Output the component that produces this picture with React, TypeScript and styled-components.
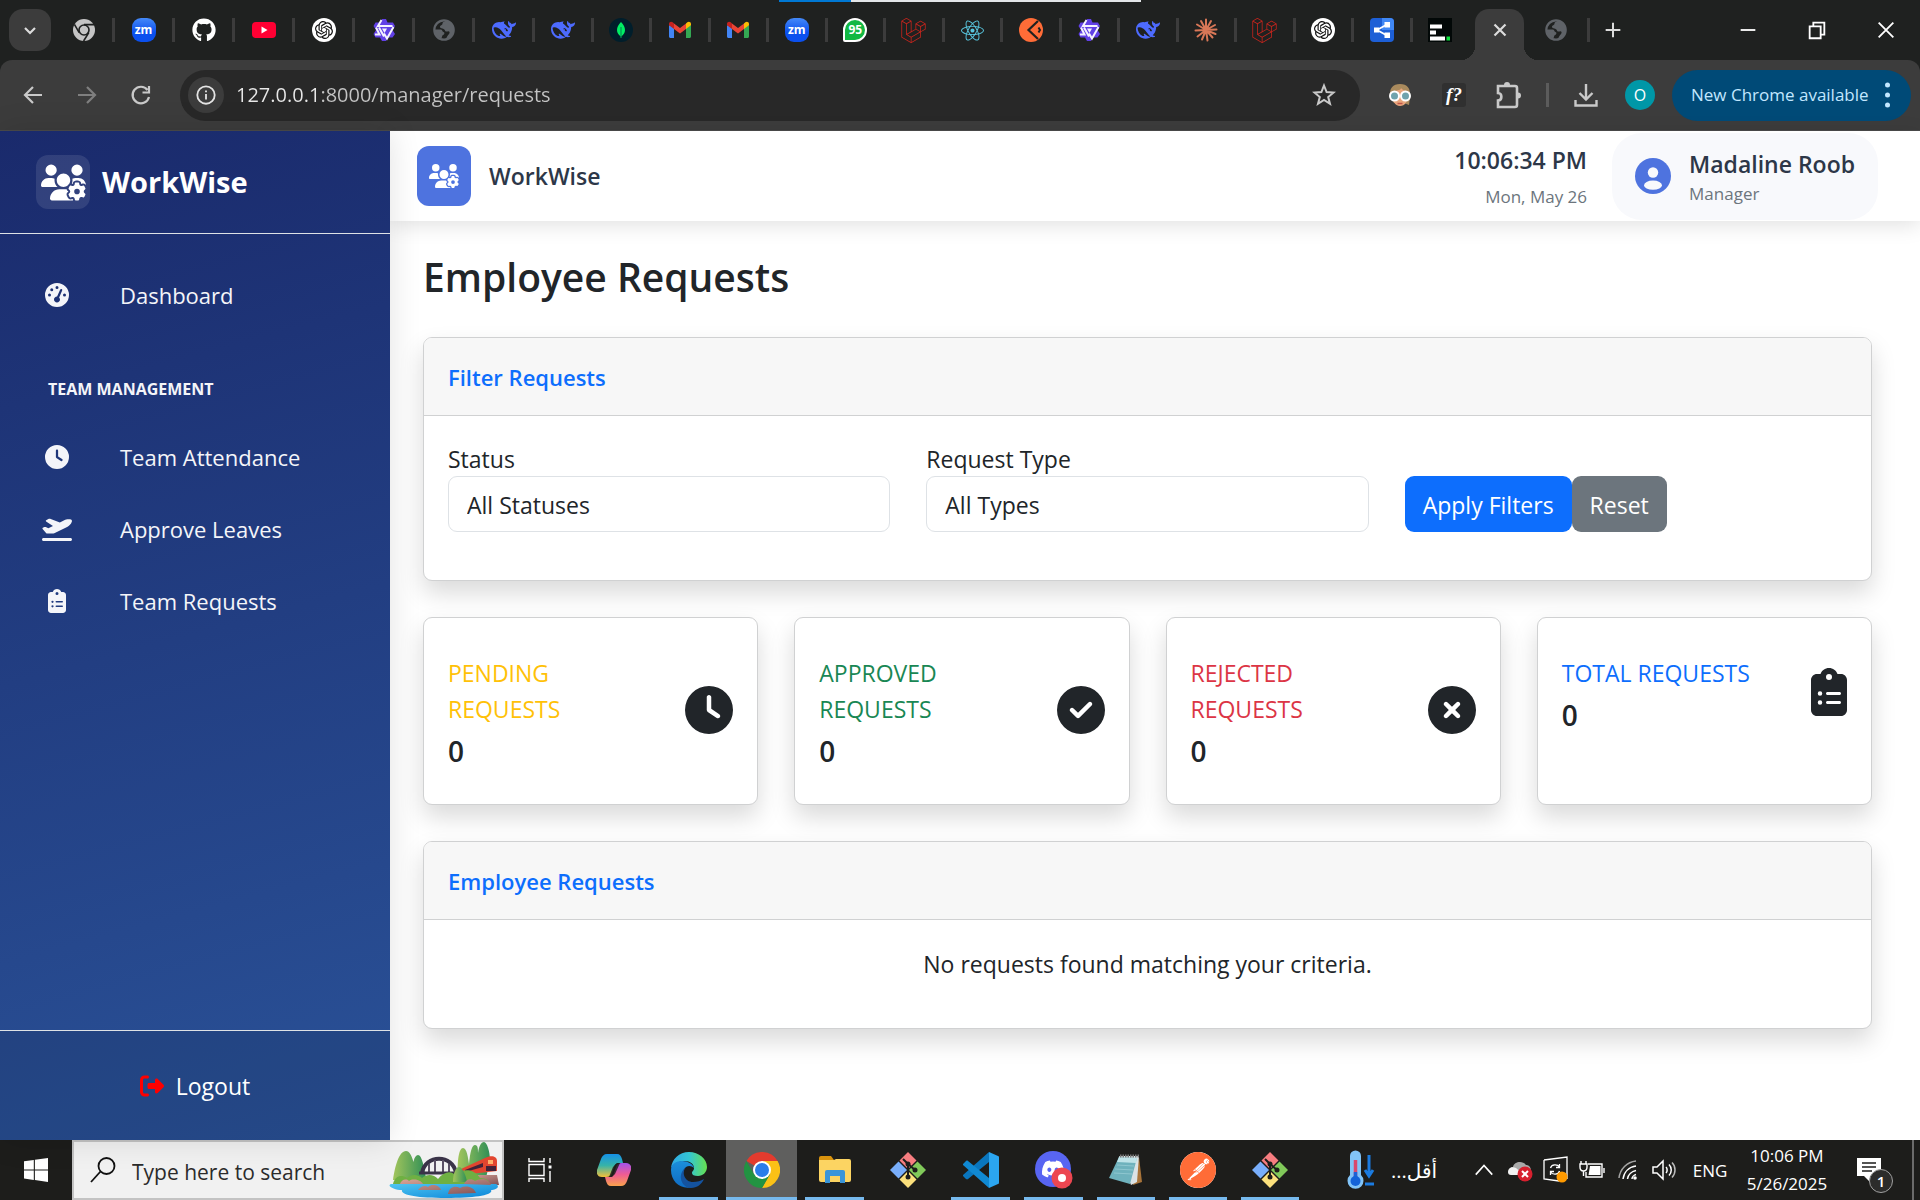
import React from "react";
import styled, { createGlobalStyle } from "styled-components";
import {
  FaUsersGear, FaGaugeHigh, FaClock, FaPlaneDeparture, FaClipboardList,
  FaRightFromBracket, FaCircleCheck, FaCircleXmark, FaGithub, FaLaravel, FaReact, FaDiscord,
} from "react-icons/fa6";
import { SiOpenai, SiPostman } from "react-icons/si";

const GlobalStyle = createGlobalStyle`
  *, *::before, *::after { box-sizing: border-box; }
  body { margin: 0; }
  body, button, input, select { font-family: "Open Sans", "Noto Sans", sans-serif; }
  h1, h2, p, ul { margin: 0; padding: 0; }
  button { border: 0; padding: 0; background: none; color: inherit; font: inherit; cursor: pointer; }
  a { color: inherit; text-decoration: none; }
  svg { display: block; flex: none; }
`;

const Screen = styled.div`
  display: flex;
  flex-direction: column;
  height: 100vh;
  overflow: hidden;
  position: relative;
`;

/* ---------- browser: tab strip ---------- */

const LoadBar = styled.div`
  position: absolute;
  top: 0;
  left: 779px;
  width: 362px;
  height: 2px;
  background: linear-gradient(90deg, #0078d4 72px, #e3e6e8 72px);
`;

const TabStrip = styled.div`
  display: flex;
  align-items: center;
  flex: none;
  height: 60px;
  padding-left: 9px;
  background: #1f2120;
  color: #dcdcdc;
`;

const TabSearch = styled.button`
  display: grid;
  place-items: center;
  width: 42px;
  height: 42px;
  margin-right: 4px;
  border-radius: 14px;
  background: #3c3c3c;
`;

const TabGroup = styled.div<{ $width: number }>`
  display: flex;
  flex: 0 0 ${(p) => p.$width}px;
`;

const Tab = styled.button<{ $last?: boolean }>`
  display: grid;
  place-items: center;
  flex: 1;
  height: 24px;
  border-right: 3px solid ${(p) => (p.$last ? "transparent" : "#3c3c3c")};
`;

const ActiveTab = styled.div`
  position: relative;
  display: grid;
  place-items: center;
  align-self: flex-end;
  width: 49px;
  height: 51px;
  margin-left: 4px;
  padding-bottom: 9px;
  border-radius: 14px 14px 0 0;
  background: #3c3c3c;
  &::before, &::after {
    content: "";
    position: absolute;
    bottom: 0;
    width: 14px;
    height: 14px;
  }
  &::before { right: 100%; background: radial-gradient(circle at 0 0, transparent 14px, #3c3c3c 14px); }
  &::after { left: 100%; background: radial-gradient(circle at 100% 0, transparent 14px, #3c3c3c 14px); }
`;

const NewTab = styled.button`
  display: grid;
  place-items: center;
  width: 46px;
  height: 42px;
`;

const WindowControls = styled.div`
  display: flex;
  margin-left: auto;
  color: #fff;
  button { display: grid; place-items: center; width: 69px; height: 60px; }
`;

const ZoomBadge = styled.span`
  display: grid;
  place-items: center;
  width: 24px;
  height: 24px;
  border-radius: 9px;
  background: linear-gradient(#4489f8, #0b50ee 60%);
  color: #fff;
  font-size: 12px;
  font-weight: 700;
  line-height: 20px;
`;

const RoundBadge = styled.span`
  display: grid;
  place-items: center;
  width: 24px;
  height: 24px;
  border-radius: 50%;
  background: #fff;
  color: #111;
`;

const WhatsBadge = styled.span`
  display: grid;
  place-items: center;
  width: 24px;
  height: 24px;
  border: 2px solid #fff;
  border-radius: 12px 12px 12px 2px;
  background: #12b843;
  color: #fff;
  font-size: 12px;
  font-weight: 700;
  line-height: 16px;
`;

/* ---------- browser: toolbar ---------- */

const Toolbar = styled.div`
  display: flex;
  align-items: center;
  flex: none;
  height: 71px;
  padding: 0 9px 0 6px;
  border-bottom: 1px solid #4a4a4a;
  background: #3c3c3c;
  color: #c9c9c9;
`;

const TabStripBack = styled.div`
  background: #1f2120;
  ${Toolbar} { border-radius: 12px 12px 0 0; }
`;

const ToolButton = styled.button<{ $dim?: boolean }>`
  display: grid;
  place-items: center;
  flex: none;
  width: 54px;
  height: 50px;
  color: ${(p) => (p.$dim ? "#7f7f7f" : "#c9c9c9")};
`;

const AddressBar = styled.div`
  display: flex;
  align-items: center;
  flex: 1;
  height: 51px;
  margin: 0 13px 0 12px;
  padding: 0 8px;
  border-radius: 26px;
  background: #282828;
`;

const SiteInfo = styled.button`
  display: grid;
  place-items: center;
  width: 36px;
  height: 36px;
  margin-right: 12px;
  border-radius: 50%;
  background: #3c3c3c;
  color: #e3e3e3;
`;

const AddressInput = styled.input`
  flex: 1;
  min-width: 0;
  padding: 0;
  border: 0;
  outline: 0;
  background: linear-gradient(90deg, #e8e8e8 86px, #c4c4c4 86px);
  background-clip: text;
  color: transparent;
  font-size: 20px;
  line-height: 32px;
`;

const StarButton = styled.button`
  display: grid;
  place-items: center;
  width: 56px;
  height: 40px;
  color: #c9c9c9;
`;

const FnBadge = styled.span`
  display: grid;
  place-items: center;
  width: 24px;
  height: 24px;
  border-radius: 3px;
  background: #303030;
  color: #fff;
  font: italic 700 19px/24px "Liberation Serif", serif;
`;

const ToolDivider = styled.span`
  width: 3px;
  height: 24px;
  margin: 0 10px 0 11px;
  background: #5c5c5c;
`;

const Avatar = styled.button`
  width: 30px;
  height: 30px;
  margin: 0 17px 0 12px;
  border-radius: 50%;
  background: #0097a7;
  color: #fff;
  font-size: 16px;
  line-height: 30px;
`;

const UpdatePill = styled.button`
  display: flex;
  align-items: center;
  justify-content: space-between;
  width: 239px;
  height: 51px;
  padding: 0 21px 0 19px;
  border-radius: 26px;
  background: #004a77;
  color: #c2e7ff;
  font-size: 17px;
  line-height: 24px;
  white-space: nowrap;
`;

/* ---------- page shell ---------- */

const Page = styled.div`
  display: flex;
  flex: 1;
  min-height: 0;
  background: #fff;
  color: #212529;
  font-size: 23px;
  line-height: 36px;
`;

const Sidebar = styled.aside`
  display: flex;
  flex-direction: column;
  flex: 0 0 390px;
  position: relative;
  z-index: 2;
  background: linear-gradient(165deg, #1a2a6c, #2a5298);
  box-shadow: 0 0 30px rgba(0, 0, 0, 0.12);
  color: #f4f5f9;
`;

const Brand = styled.div`
  display: flex;
  align-items: center;
  gap: 12px;
  height: 103px;
  padding: 0 36px;
  border-bottom: 1px solid #dee2e6;
  color: #fff;
  font-size: 29px;
  font-weight: 700;
`;

const BrandMark = styled.span`
  display: grid;
  place-items: center;
  width: 54px;
  height: 54px;
  border-radius: 12px;
  background: rgba(255, 255, 255, 0.1);
`;

const Nav = styled.nav`
  flex: 1;
  padding-top: 25px;
  ul { list-style: none; }
`;

const NavLink = styled.a`
  display: flex;
  align-items: center;
  gap: 39px;
  height: 72px;
  padding-left: 33px;
  font-size: 22px;
`;

const NavIcon = styled.span`
  display: grid;
  place-items: center;
  width: 48px;
`;

const NavSection = styled.p`
  padding: 46px 48px 20px;
  font-size: 16px;
  font-weight: 700;
  line-height: 24px;
  white-space: nowrap;
`;

const SidebarFooter = styled.div`
  display: flex;
  align-items: center;
  justify-content: center;
  height: 110px;
  border-top: 1px solid #dee2e6;
  background: rgba(0, 0, 0, 0.1);
`;

const LogoutButton = styled.button`
  display: flex;
  align-items: center;
  gap: 12px;
  color: #fff;
  svg { color: #f00; }
`;

const Main = styled.main`
  flex: 1;
  min-width: 0;
`;

const Header = styled.header`
  display: flex;
  align-items: center;
  height: 90px;
  padding: 0 42px 0 27px;
  background: #fff;
  box-shadow: 0 4px 20px rgba(0, 0, 0, 0.12);
  color: #2d3748;
  font-weight: 600;
`;

const HeaderMark = styled.span`
  display: grid;
  place-items: center;
  width: 54px;
  height: 60px;
  margin-right: 18px;
  border-radius: 12px;
  background: #4e73df;
  color: #fff;
`;

const Clock = styled.div`
  margin-left: auto;
  margin-right: 25px;
  text-align: right;
`;

const Muted = styled.p`
  color: #6c757d;
  font-size: 17px;
  font-weight: 400;
  line-height: 24px;
`;

const ClockTime = styled.p`
  margin-bottom: 8px;
  line-height: 34px;
`;

const Profile = styled.div`
  display: flex;
  align-items: center;
  gap: 18px;
  height: 87px;
  padding: 0 23px;
  border-radius: 30px;
  background: #f8f9fc;
`;

/* ---------- content ---------- */

const Content = styled.div`
  display: flex;
  flex-direction: column;
  gap: 36px;
  padding: 32px 48px 36px 33px;
`;

const Title = styled.h1`
  font-size: 39px;
  font-weight: 600;
  line-height: 48px;
`;

const Card = styled.section`
  border: 1px solid #d0d1d2;
  border-radius: 9px;
  background: #fff;
  box-shadow: 0 12px 24px rgba(0, 0, 0, 0.15);
`;

const CardHeader = styled.h2`
  padding: 21px 24px 20px;
  border-bottom: 1px solid #d0d1d2;
  border-radius: 8px 8px 0 0;
  background: #f7f7f7;
  color: #0d6efd;
  font-size: 22px;
  font-weight: 600;
  line-height: 36px;
`;

const FilterForm = styled.form`
  display: grid;
  grid-template-columns: repeat(3, 1fr);
  align-items: end;
  gap: 36px;
  padding: 26px 24px 48px;
`;

const Field = styled.div`
  display: flex;
  flex-direction: column;
  label { line-height: 34px; }
  select {
    height: 56px;
    padding: 2px 18px 0;
    border: 1px solid #dee2e6;
    border-radius: 9px;
    background: #fff;
    color: #212529;
    font-size: 23px;
    appearance: none;
  }
`;

const Buttons = styled.div`
  display: flex;
`;

const ActionButton = styled.button<{ $tone: string }>`
  height: 56px;
  padding: 2px 18px 0;
  border-radius: 9px;
  background: ${(p) => p.$tone};
  color: #fff;
`;

const Stats = styled.div`
  display: grid;
  grid-template-columns: repeat(4, 1fr);
  gap: 36px;
`;

const StatBody = styled.div<{ $iconWidth: number }>`
  display: flex;
  align-items: center;
  justify-content: space-between;
  gap: 36px;
  padding: 32px 24px 35px;
  svg { width: ${(p) => p.$iconWidth}px; height: 48px; }
`;

const StatLabel = styled.p<{ $tone: string }>`
  padding: 5px 0 6px;
  color: ${(p) => p.$tone};
`;

const StatValue = styled.p`
  font-size: 28px;
  font-weight: 600;
`;

const Empty = styled.p`
  padding: 26px 24px 46px;
  text-align: center;
`;

/* ---------- taskbar ---------- */

const Taskbar = styled.footer`
  display: flex;
  flex: none;
  height: 60px;
  background: #1d1d1b;
  color: #fff;
`;

const StartButton = styled.button`
  display: grid;
  place-items: center;
  flex: 0 0 72px;
`;

const SearchBox = styled.label`
  display: flex;
  align-items: center;
  flex: 0 0 432px;
  min-width: 0;
  padding-left: 16px;
  border: 2px solid #c3c3c3;
  background: #f1f1f1;
  input {
    flex: 1;
    width: 0;
    min-width: 0;
    margin-left: 16px;
    padding: 3px 0 0;
    border: 0;
    outline: 0;
    background: none;
    font-size: 21px;
    &::placeholder { color: #2b2b2b; opacity: 1; }
  }
`;

const TaskButton = styled.button<{ $open?: boolean; $active?: boolean; $width?: number }>`
  display: grid;
  place-items: center;
  position: relative;
  flex: 0 0 ${(p) => p.$width || 73}px;
  &::before {
    content: "";
    position: absolute;
    z-index: 0;
    inset: 0 1px;
    background: ${(p) => (p.$active ? "#5f5f5e" : "none")};
  }
  &::after {
    content: "";
    position: absolute;
    bottom: 0;
    left: ${(p) => (p.$active ? 1 : 7)}px;
    right: ${(p) => (p.$active ? 1 : 7)}px;
    height: 3px;
    background: ${(p) => (p.$open ? "#76b9ed" : "none")};
  }
  svg { position: relative; }
`;

const PostmanBadge = styled.span`
  border-radius: 50%;
  background: #fff;
  color: #ff6c37;
`;

const Tray = styled.div`
  display: flex;
  align-items: center;
  margin-left: auto;
  font-size: 17px;
`;

const TrayButton = styled.button`
  display: grid;
  place-items: center;
  width: 36px;
  height: 60px;
`;

const Weather = styled.button`
  display: flex;
  align-items: center;
  gap: 16px;
  margin-right: 29px;
  font-family: "Open Sans", "DejaVu Sans", sans-serif;
  font-size: 20px;
`;

const Language = styled.button`
  width: 56px;
  text-align: center;
`;

const DateTime = styled.button`
  width: 104px;
  margin-left: -3px;
  line-height: 28px;
  text-align: center;
`;

const Notice = styled.button`
  position: relative;
  display: grid;
  place-items: center;
  width: 60px;
  height: 60px;
  span {
    position: absolute;
    top: 29px;
    left: 30px;
    width: 24px;
    height: 24px;
    border: 1px solid #a0a0a0;
    border-radius: 50%;
    background: #2c2c2b;
    font-size: 15px;
    font-weight: 600;
    line-height: 22px;
  }
`;

const ShowDesktop = styled.button`
  width: 8px;
  height: 60px;
  margin-left: 13px;
  border-left: 2px solid #6b6b6b;
`;

/* ---------- drawings ---------- */

const ChromeGray = () => (
  <svg width="24" height="24" viewBox="0 0 24 24">
    <circle cx="12" cy="12" r="11" fill="#c5c5c5" />
    <circle cx="12" cy="12" r="5.8" fill="#1f2120" />
    <circle cx="12" cy="12" r="4.2" fill="#c5c5c5" />
    <path d="M12 6.6h10M7.2 14.6 2.4 6.4M16.8 14.6 11.6 23" stroke="#1f2120" strokeWidth="1.6" />
  </svg>
);

const Youtube = () => (
  <svg width="24" height="24" viewBox="0 0 24 24">
    <rect x="0" y="4" width="24" height="16" rx="4" fill="#ff0033" />
    <path d="m9.500 8.600 6 3.400-6 3.400z" fill="#fff" />
  </svg>
);

const Qwen = () => (
  <svg width="24" height="24" viewBox="0 0 24 24">
    <path d="M10 1h4l1.500 3.500H21l2 3.500-2.500 4 2.500 4-2.500 3.500H16L14 23h-4l-2-3.500H3.500L1.500 16 4 12 1.500 8l2-3.500H8z" fill="#6140e6" />
    <path d="M9.500 2 6 8h14.500M21.500 9 15 20.500l-3-5M3 16.500h4.500L4 9.500M7 9.500l5 9" fill="none" stroke="#f4f2ff" strokeWidth="2" />
    <path d="M10 10.500h5l-2.500 4.500z" fill="#f4f2ff" />
  </svg>
);

const Globe = () => (
  <svg width="24" height="24" viewBox="0 0 24 24">
    <circle cx="12" cy="12" r="9.700" fill="none" stroke="#5f6368" strokeWidth="2.200" />
    <path d="M14 2.500c-1 1.500-3.500 1-3.500 3S8 7 8 9s4.500 1 5 3.500 4-.5 4.500 1.500-2 3-2.500 5l-2 2.500c5 0 9-4 9-9.500s-3-9-8-9.500zM2.500 11.500h6c2 0 1.500 2 3 2.500s1 2.500-.5 3-.5 3-2 3.500C5 19 2.500 15.500 2.500 11.500z" fill="#5f6368" />
  </svg>
);

const Whale = () => (
  <svg width="24" height="24" viewBox="0 0 24 24" fill="#4d6bfe">
    <path d="M23.748 4.482c-.254-.124-.364.113-.512.234-.051.039-.094.09-.137.136-.372.397-.806.657-1.373.626-.829-.046-1.537.214-2.163.848-.133-.782-.575-1.248-1.247-1.548-.352-.156-.708-.311-.955-.65-.172-.241-.219-.51-.305-.774-.055-.16-.11-.323-.293-.35-.2-.031-.278.136-.356.276-.313.572-.434 1.202-.422 1.84.027 1.436.633 2.58 1.838 3.393.137.093.172.187.129.323-.082.28-.18.552-.266.833-.055.179-.137.217-.329.14a5.526 5.526 0 01-1.736-1.18c-.857-.828-1.631-1.742-2.597-2.458a11.365 11.365 0 00-.689-.471c-.985-.957.13-1.743.388-1.836.27-.098.093-.432-.779-.428-.872.004-1.67.295-2.687.684a3.055 3.055 0 01-.465.137 9.597 9.597 0 00-2.883-.102c-1.885.21-3.39 1.102-4.497 2.623C.082 8.606-.231 10.684.152 12.85c.403 2.284 1.569 4.175 3.36 5.653 1.858 1.533 3.997 2.284 6.438 2.14 1.482-.085 3.133-.284 4.994-1.86.47.234.962.327 1.78.397.63.059 1.236-.03 1.705-.128.735-.156.684-.837.419-.961-2.155-1.004-1.682-.595-2.113-.926 1.096-1.296 2.746-2.642 3.392-7.003.05-.347.007-.565 0-.845-.004-.17.035-.237.23-.256a4.173 4.173 0 001.545-.475c1.396-.763 1.96-2.015 2.093-3.517.02-.23-.004-.467-.247-.588zM11.581 18c-2.089-1.642-3.102-2.183-3.52-2.16-.392.024-.321.471-.235.763.09.288.207.486.371.739.114.167.192.416-.113.603-.673.416-1.842-.14-1.897-.167-1.361-.802-2.5-1.86-3.301-3.307-.774-1.393-1.224-2.887-1.298-4.482-.02-.386.093-.522.477-.592a4.696 4.696 0 011.529-.039c2.132.312 3.946 1.265 5.468 2.774.868.86 1.525 1.887 2.202 2.891.72 1.066 1.494 2.082 2.48 2.914.348.292.625.514.891.677-.802.09-2.14.11-3.054-.614zm1-6.440a.306.306 0 01.415-.287.302.302 0 01.2.288.306.306 0 01-.31.307.303.303 0 01-.304-.308zm3.11 1.596c-.2.081-.399.151-.59.16a1.245 1.245 0 01-.798-.254c-.274-.23-.47-.358-.552-.758a1.73 1.73 0 01.016-.588c.07-.327-.008-.537-.239-.727-.187-.156-.426-.199-.688-.199a.559.559 0 01-.254-.078c-.11-.054-.2-.19-.114-.358.028-.054.16-.186.192-.21.356-.202.767-.136 1.146.016.352.144.618.408 1.001.782.391.451.462.576.685.914.176.265.336.537.445.848.067.195-.019.354-.25.452z" />
  </svg>
);

const Leaf = () => (
  <svg width="24" height="24" viewBox="0 0 24 24">
    <circle cx="12" cy="12" r="12" fill="#001e2b" />
    <path d="M12 4c2.600 3 4 5.200 4 8s-1.400 4.800-3.500 6.200L12.300 20h-.6l-.2-1.800C9.400 16.800 8 14.800 8 12s1.400-5 4-8z" fill="#00ed64" />
    <path d="M12 9v10" stroke="#00684a" strokeWidth=".8" />
  </svg>
);

const Gmail = () => (
  <svg width="24" height="24" viewBox="0 0 24 24">
    <path d="M1 7v11.500C1 19.300 1.700 20 2.500 20H6V10z" fill="#4285f4" />
    <path d="M18 10v10h3.500c.8 0 1.500-.7 1.500-1.500V7z" fill="#34a853" />
    <path d="M18 5.500V11l5-3.800V6c0-2-2.200-2.900-3.700-1.700z" fill="#fbbc04" />
    <path d="M6 11V5.500l6 4.500 6-4.500V11l-6 4.500z" fill="#ea4335" />
    <path d="M1 6v1.200L6 11V5.500L4.700 4.300C3.200 3.100 1 4 1 6z" fill="#c5221f" />
  </svg>
);

const ApiDisc = () => (
  <svg width="24" height="24" viewBox="0 0 24 24">
    <circle cx="12" cy="12" r="12" fill="#ff6c37" />
    <path d="M19 3 9.500 12 19 21" fill="none" stroke="#1f2120" strokeWidth="2.200" />
    <path d="m19.500 14.500 1.500-2.500-1.500-2.500" fill="none" stroke="#1f2120" strokeWidth="2" />
  </svg>
);

const Burst = () => (
  <svg width="24" height="24" viewBox="0 0 24 24" stroke="#d97757" strokeWidth="2" strokeLinecap="round">
    <path d="M12 12V1.500M12 12l5-9M12 12l9-5M12 12l10.500-.5M12 12l9.500 4M12 12l6.500 7.500M12 12l1.500 10.500M12 12l-4 9.500M12 12l-8.500 6.500M12 12l-10.500.5M12 12 3 6.500M12 12 7 3" />
  </svg>
);

const ShareTile = () => (
  <svg width="24" height="24" viewBox="0 0 24 24">
    <rect width="24" height="24" rx="4" fill="#1d5fd6" />
    <path d="M12 0h8a4 4 0 0 1 4 4v8H12z" fill="#4088f5" />
    <path d="M17 6.500 7 12l10 5.500" fill="none" stroke="#fff" strokeWidth="1.800" />
    <path d="M14.500 4H20v5.500h-5.500zM4 9.500h5v5H4zM14.500 14.500H20V20h-5.500z" fill="#fff" />
  </svg>
);

const BarsTile = () => (
  <svg width="24" height="24" viewBox="0 0 24 24">
    <path fill="#020807" d="M0 0h24v24H0z" />
    <path d="M2 8.500h12M2 14.500h6M2 20.500h15" stroke="#fff" strokeWidth="4" />
    <path d="M18.500 20.500h3.500" stroke="#0be33c" strokeWidth="4" />
  </svg>
);

const Stroke = ({ d, size = 24, w = 2 }: { d: string; size?: number; w?: number }) => (
  <svg width={size} height={size} viewBox="0 0 24 24" fill="none" stroke="currentColor" strokeWidth={w}>
    <path d={d} />
  </svg>
);

const Face = () => (
  <svg width="24" height="24" viewBox="0 0 24 24">
    <path d="M2 14C1 5 5 1 12 1s11 4 10 13l-1 8-5-2H6z" fill="#a98a5d" />
    <path d="M4 10c2-3 9-2 9-5 2 3 7 2 7 6 0 8-3 12-8 12S4 18 4 10z" fill="#e8a57c" />
    <circle cx="6.500" cy="13" r="4.500" fill="#6fa3ad" stroke="#fff" strokeWidth="2" />
    <circle cx="17.500" cy="13" r="4.500" fill="#6fa3ad" stroke="#fff" strokeWidth="2" />
    <path d="M9.500 20.500h5" stroke="#c0564a" strokeWidth="1.500" />
  </svg>
);

const Puzzle = () => (
  <svg width="30" height="30" viewBox="0 0 30 30" fill="none" stroke="#c9c9c9" strokeWidth="2.600">
    <path d="M5 6h17a2 2 0 0 1 2 2v17a2 2 0 0 1-2 2H5v-6.500c4.500 0 4.500-7.500 0-7.500z" />
    <path d="M11 5a3 3 0 0 1 6 0zM25 12.500a3 3 0 0 1 0 6z" fill="#c9c9c9" stroke="none" />
  </svg>
);

const Account = () => (
  <svg width="36" height="36" viewBox="0 0 36 36">
    <circle cx="18" cy="18" r="18" fill="#4e73df" />
    <circle cx="18" cy="14.500" r="5.200" fill="#f8f9fc" />
    <ellipse cx="18" cy="27.200" rx="9" ry="4.600" fill="#f8f9fc" />
  </svg>
);

const Windows = () => (
  <svg width="24" height="24" viewBox="0 0 24 24" fill="#fff">
    <path d="M0 3.300 9.800 2v9.400H0zM10.900 1.800 24 0v11.400H10.900zM0 12.500h9.800v9.400L0 20.600zM10.900 12.500H24V24l-13.100-1.900z" />
  </svg>
);

const Scene = () => (
  <svg width="114" height="56" viewBox="0 0 112 56">
    <defs>
      <linearGradient id="tree" x1="0" x2="1"><stop offset="0" stopColor="#a3c55c" /><stop offset="1" stopColor="#2f8f56" /></linearGradient>
      <linearGradient id="lake" x1="0" y1="0" x2="1" y2="1"><stop offset="0" stopColor="#4fc6f2" /><stop offset="1" stopColor="#0a84d8" /></linearGradient>
      <linearGradient id="rock" x1="0" x2="1" y2="1"><stop offset="0" stopColor="#dba698" /><stop offset="1" stopColor="#7d4f54" /></linearGradient>
    </defs>
    <path d="M4 38c2-14 6-29 13-29s8 18 14 29zM24 36c-1-14 1-23 5-23s6 12 8 23z" fill="url(#tree)" />
    <path d="M69 36c-1-18 1-30 5-30s5 10 6 16c1-12 3-19 6-19s3 4 3 8c1-7 3-11 6-11s6 10 6 18l-4 18z" fill="url(#tree)" />
    <path d="M33 31c3-19 31-19 34 0" fill="none" stroke="#3a3348" strokeWidth="4" />
    <path d="M40 22v9M46 18v13M54 18v13M60 22v9" stroke="#5a5065" strokeWidth="2" />
    <path d="M30 31h42" stroke="#3a3348" strokeWidth="3" />
    <path d="m72 27 24-11c6-3 12-2 12 3v10l-36 4z" fill="#e2452f" />
    <path d="m76 28 18-7v4l-18 5zM97 24h10v5H97z" fill="#412239" />
    <path d="M99 18h5v4h-5z" fill="#ffb06a" />
    <path d="M76 33h32l2 10H74z" fill="url(#rock)" />
    <path d="M4 42c2-8 8-10 14-6 5-5 12-3 15 0 6-5 12-3 16 1 6-8 14-9 18-3 5-8 18-8 24 2 8 0 10 4 10 8z" fill="#6fb043" />
    <path d="M64 40c0-9 3-15 6-15s7 8 8 15z" fill="url(#tree)" />
    <path d="M2 42h105c5 3-1 6-5 6 3 5-16 8-45 8s-46-3-44-8C6 48-3 44 2 42z" fill="url(#lake)" />
    <path d="M11 42c1-4 6-6 9-3 4-3 12-1 14 3zM75 42c2-5 7-6 11-3 6-4 14-2 16 4zM29 48c3-4 7-5 10-3 5-4 12-1 13 3zM59 52c1-7 7-9 12-6 6-3 14-1 16 5z" fill="url(#rock)" />
  </svg>
);

const TaskView = () => (
  <svg width="26" height="26" viewBox="0 0 26 26" fill="none" stroke="#fff" strokeWidth="1.400">
    <path d="M2 1v3.500h15V1M2 25v-3.500h15V25M2 7.500h15v11H2zM23 1v5M23 14v11" />
    <path fill="#fff" stroke="none" d="M21.500 8.500h3v3h-3z" />
  </svg>
);

const Copilot = () => (
  <svg width="34" height="32" viewBox="0 0 34 32">
    <defs>
      <linearGradient id="cpa" x1="0" y1="0" x2="0" y2="1"><stop offset="0" stopColor="#1591e8" /><stop offset=".5" stopColor="#36b3a8" /><stop offset="1" stopColor="#f3c13a" /></linearGradient>
      <linearGradient id="cpb" x1="0" y1="0" x2="0" y2="1"><stop offset="0" stopColor="#a352ea" /><stop offset=".5" stopColor="#ef5c93" /><stop offset="1" stopColor="#f9a24c" /></linearGradient>
    </defs>
    <path d="M10 0h10c3 0 4 2 5 5l1 4h-4c-3 0-4 1-5 4l-2 6c-1 3-3 4-6 4H5c-4 0-6-3-5-7L4 5c1-3 3-5 6-5z" fill="url(#cpa)" />
    <path d="M24 32H14c-3 0-4-2-5-5l-1-4h4c3 0 4-1 5-4l2-6c1-3 3-4 6-4h4c4 0 6 3 5 7l-4 11c-1 3-3 5-6 5z" fill="url(#cpb)" />
    <path d="m16 13 4-4h3l-5 11-3 3h-3z" fill="#1d1d1b" opacity=".85" />
  </svg>
);

const Edge = () => (
  <svg width="36" height="36" viewBox="0 0 36 36">
    <defs>
      <linearGradient id="ega" x1="0" x2="1"><stop offset="0" stopColor="#2fa8e6" /><stop offset=".5" stopColor="#33c6d5" /><stop offset="1" stopColor="#66e04e" /></linearGradient>
      <linearGradient id="egb" x1="0" y1="0" x2="0" y2="1"><stop offset="0" stopColor="#1b8fdb" /><stop offset="1" stopColor="#0f6cc4" /></linearGradient>
    </defs>
    <path d="M0 16C1 7 8 0 18 0s18 7 18 15c0 5-4 9-9 9-4 0-6-1-6-3s2-2 2-5c0-4-4-7-9-7C8 9 3 11 0 16z" fill="url(#ega)" />
    <path d="M0 18c0-6 5-9 11-9s11 3 12 7c-2-2-5-3-8-1-6 5-3 17 6 20-11 3-21-5-21-17z" fill="url(#egb)" />
    <path d="M15 15c-5 6-1 15 7 15 4 0 8-1 11-3-2 5-7 9-13 9-9 0-15-13-5-21z" fill="#14539f" />
  </svg>
);

const Chrome = () => (
  <svg width="36" height="36" viewBox="0 0 36 36">
    <path d="M18 18 2.400 9A18 18 0 0 1 33.600 9z" fill="#e33b2e" />
    <path d="M18 18V9h15.600A18 18 0 0 1 18 36l7.800-13.500z" fill="#fbc116" />
    <path d="M18 18l7.800 4.500L18 36A18 18 0 0 1 2.400 9l7.800 13.500z" fill="#229342" />
    <circle cx="18" cy="18" r="9" fill="#fff" />
    <circle cx="18" cy="18" r="7" fill="#2b7de9" />
  </svg>
);

const Explorer = () => (
  <svg width="34" height="30" viewBox="0 0 34 30">
    <path d="M1 3a2 2 0 0 1 2-2h10l3 4H1z" fill="#d9930d" />
    <path d="M1 5h15l2-1h13a2 2 0 0 1 2 2v19a2 2 0 0 1-2 2H3a2 2 0 0 1-2-2z" fill="#fcd462" />
    <path d="M7 28V17a2 2 0 0 1 2-2h16a2 2 0 0 1 2 2v11h-5v-7H12v7z" fill="#3a95d9" />
  </svg>
);

const GitBash = () => (
  <svg width="36" height="36" viewBox="0 0 36 36">
    <path d="m18 0 8.500 8.500L18 17 9.500 8.500z" fill="#f77d80" />
    <path d="m27.500 9.500 8.500 8.500-8.500 8.500L19 18z" fill="#81c95a" />
    <path d="m8.500 9.500L17 18l-8.500 8.500L0 18z" fill="#79aefb" />
    <path d="m18 19 8.500 8.500L18 36l-8.500-8.500z" fill="#fbe07c" />
    <path d="M13 7l5 5v13M18 12l7 6" fill="none" stroke="#1d1d1b" strokeWidth="2" />
    <g fill="#1d1d1b"><circle cx="18" cy="12" r="2.500" /><circle cx="18" cy="25" r="2.500" /><circle cx="25" cy="18" r="2.500" /></g>
  </svg>
);

const VsCode = () => (
  <svg width="36" height="36" viewBox="0 0 36 36">
    <path d="M26 0v10L5 27c-1 1-2 0-2 0l-3-3v-1z" fill="#0a76be" />
    <path d="M26 36V26L5 9C4 8 3 9 3 9l-3 3v1z" fill="#1089d3" />
    <path d="m26 0 9 4c1 0 1 1 1 2v24c0 1 0 2-1 2l-9 4z" fill="#2ba5f0" />
  </svg>
);

const Discord = () => (
  <svg width="38" height="38" viewBox="0 0 38 38">
    <circle cx="18" cy="18" r="18" fill="#5865f2" />
    <FaDiscord x="6" y="6" size={24} color="#fff" />
    <circle cx="27" cy="27" r="10.500" fill="#ec4650" />
    <circle cx="27" cy="27" r="4" fill="#fff" />
  </svg>
);

const Notepad = () => (
  <svg width="34" height="34" viewBox="0 0 34 34">
    <path d="M30 4l3 25-9 3z" fill="#a8743a" />
    <path d="M10 3h20l-2 26-6 3z" fill="#dbe3e6" />
    <path d="m10 4 18 1-7 26L0 25z" fill="#6fb2bd" />
    <path d="m10 4 18 1-1 5-19-1z" fill="#bfe3e8" />
    <path d="m8 12 17 1M6 16l18 1M5 20l18 1" stroke="#8fc7d0" strokeWidth="1" />
    <path d="M11 3h19" stroke="#777" strokeWidth="3" strokeDasharray="1.500 1" />
  </svg>
);

const Thermometer = () => (
  <svg width="28" height="40" viewBox="0 0 28 40">
    <path d="M3 6a5.500 5.500 0 0 1 11 0v19a8 8 0 1 1-11 0z" fill="#82c4f8" />
    <path d="M8.500 10v20" stroke="#d9486e" strokeWidth="3.500" />
    <path d="M8.500 22v8" stroke="#1c62d6" strokeWidth="3.500" />
    <circle cx="8.500" cy="31" r="5" fill="#1362d8" />
    <path d="M22 5v20M18 20l4 6 4-6M18 34h9" fill="none" stroke="#1b7be0" strokeWidth="3" />
  </svg>
);

const CloudError = () => (
  <svg width="26" height="24" viewBox="0 0 26 24">
    <path d="M2 15c-1-4 2-6 4-6 1-5 9-7 13-2 4 0 6 4 4 8z" fill="#a9a9a9" />
    <path d="M1 14c0-4 4-6 8-4l8 7H4c-2 0-3-1-3-3z" fill="#f2f2f2" />
    <circle cx="18" cy="16" r="7.500" fill="#d7202e" />
    <path d="m15 13 6 6m0-6-6 6" stroke="#fff" strokeWidth="2" />
  </svg>
);

const SyncTile = () => (
  <svg width="26" height="28" viewBox="0 0 26 28" fill="none" stroke="#fff" strokeWidth="1.300">
    <path d="M1 4 24 1v22M1 4v19l15 2" />
    <path d="M7.500 12c1-4 7-4 9-1m0-3v3.500H13M16.500 15c-1 4-7 4-9 1m0 3v-3.500H11" />
    <circle cx="19" cy="21" r="5.500" fill="#ff9a00" stroke="none" />
  </svg>
);

const Battery = () => (
  <svg width="26" height="20" viewBox="0 0 26 20" fill="none" stroke="#fff" strokeWidth="1.400">
    <path d="M9 4h14v13H7v-5M25 8v5M2 1v3M7 1v3M1 4h7v3c0 3-2 4-3.500 4S1 10 1 7zM4.500 11v5" />
    <path d="M11 6h10.500v9H9.500z" fill="#fff" stroke="none" />
  </svg>
);

const Wifi = () => (
  <svg width="20" height="20" viewBox="0 0 20 20" fill="none" stroke="#fff" strokeWidth="1.500">
    <path d="M1 18C2 9 9 2 18 1" opacity=".6" />
    <path d="M5 19C6 12 11 7 18 6M9.500 19c.5-4 4-7.500 8.500-8.500M14 19c0-2 2-4 4-4.500" />
    <circle cx="17" cy="18" r="1.800" fill="#fff" stroke="none" />
  </svg>
);

const Speaker = () => (
  <svg width="24" height="22" viewBox="0 0 24 22" fill="none" stroke="#fff" strokeWidth="1.500">
    <path d="M1 8h4l6-6v18l-6-6H1zM14 8c1.500 1.500 1.500 4.500 0 6M17 5.500c3 3 3 8 0 11" />
    <path d="M20 3.500c4 4 4 11 0 15" opacity=".7" />
  </svg>
);

const NoticeGlyph = () => (
  <svg width="24" height="24" viewBox="0 0 24 24">
    <path d="M0 0h24v18H13v6l-6-6H0z" fill="#fff" />
    <path d="M5 5h14M5 9h14M5 13h10" stroke="#1d1d1b" strokeWidth="1.500" />
  </svg>
);

/* ---------- data ---------- */

const gpt = <RoundBadge><SiOpenai size={18} /></RoundBadge>;
const laravel = <FaLaravel size={25} color="#c9251d" />;

const pinnedTabs: [string, React.ReactNode][] = [
  ["Chrome", <ChromeGray />],
  ["Zoom", <ZoomBadge>zm</ZoomBadge>],
  ["GitHub", <FaGithub size={24} color="#fff" />],
  ["YouTube", <Youtube />],
  ["ChatGPT", gpt],
  ["Qwen", <Qwen />],
  ["Page", <Globe />],
  ["DeepSeek", <Whale />],
];

const openTabs: [string, React.ReactNode][] = [
  ["DeepSeek", <Whale />],
  ["MongoDB", <Leaf />],
  ["Gmail", <Gmail />],
  ["Gmail", <Gmail />],
  ["Zoom", <ZoomBadge>zm</ZoomBadge>],
  ["WhatsApp", <WhatsBadge>95</WhatsBadge>],
  ["Laravel", laravel],
  ["React", <FaReact size={23} color="#58c4dc" />],
  ["API", <ApiDisc />],
  ["Qwen", <Qwen />],
  ["DeepSeek", <Whale />],
  ["Claude", <Burst />],
  ["Laravel", laravel],
  ["ChatGPT", gpt],
  ["Share", <ShareTile />],
  ["Board", <BarsTile />],
];

const teamLinks: [string, React.ReactNode][] = [
  ["Team Attendance", <FaClock size={24} />],
  ["Approve Leaves", <FaPlaneDeparture size={30} />],
  ["Team Requests", <FaClipboardList size={24} />],
];

const stats = [
  { label: "PENDING REQUESTS", tone: "#ffc107", icon: <FaClock />, iconWidth: 48 },
  { label: "APPROVED REQUESTS", tone: "#198754", icon: <FaCircleCheck />, iconWidth: 48 },
  { label: "REJECTED REQUESTS", tone: "#dc3545", icon: <FaCircleXmark />, iconWidth: 48 },
  { label: "TOTAL REQUESTS", tone: "#0d6efd", icon: <FaClipboardList />, iconWidth: 36 },
];

const tasks = [
  { name: "Task View", icon: <TaskView />, width: 72 },
  { name: "Copilot", icon: <Copilot />, width: 76 },
  { name: "Edge", icon: <Edge />, open: true },
  { name: "Chrome", icon: <Chrome />, open: true, active: true },
  { name: "File Explorer", icon: <Explorer />, open: true },
  { name: "Git Bash", icon: <GitBash /> },
  { name: "VS Code", icon: <VsCode />, open: true },
  { name: "Discord", icon: <Discord />, open: true },
  { name: "Notepad", icon: <Notepad />, open: true, width: 72 },
  { name: "Postman", icon: <PostmanBadge><SiPostman size={36} /></PostmanBadge>, open: true, width: 72 },
  { name: "Git", icon: <GitBash />, open: true, width: 72 },
];

export default function App() {
  return (
    <Screen>
      <GlobalStyle />
      <TabStrip>
        <TabSearch aria-label="Search tabs"><Stroke d="m6 9.500 6 6 6-6" size={20} w={2.6} /></TabSearch>
        <TabGroup $width={480}>
          {pinnedTabs.map(([name, icon], i) => <Tab key={i} aria-label={name}>{icon}</Tab>)}
        </TabGroup>
        <TabGroup $width={936}>
          {openTabs.map(([name, icon], i) => (
            <Tab key={i} aria-label={name} $last={i === openTabs.length - 1}>{icon}</Tab>
          ))}
        </TabGroup>
        <ActiveTab><Stroke d="m6 6 12 12M18 6 6 18" size={22} w={2.4} /></ActiveTab>
        <TabGroup $width={66}><Tab aria-label="Page"><Globe /></Tab></TabGroup>
        <NewTab aria-label="New tab"><Stroke d="M12 4v16M4 12h16" size={22} w={2.2} /></NewTab>
        <WindowControls>
          <button aria-label="Minimize"><Stroke d="M4 12h16" size={22} w={2} /></button>
          <button aria-label="Restore"><Stroke d="M4 8h12v13H4zM8 8V4h12v13h-4" size={22} w={2} /></button>
          <button aria-label="Close"><Stroke d="m4 4 16 16M20 4 4 20" size={22} w={2} /></button>
        </WindowControls>
      </TabStrip>
      <LoadBar />
      <TabStripBack>
        <Toolbar>
          <ToolButton aria-label="Back"><Stroke d="M21 12H4M12 4l-8 8 8 8" w={2.2} /></ToolButton>
          <ToolButton aria-label="Forward" $dim><Stroke d="M3 12h17M12 4l8 8-8 8" w={2.2} /></ToolButton>
          <ToolButton aria-label="Reload"><Stroke d="M20 14a8.300 8.300 0 1 1-1.500-7M20 3v6.500h-6.500" w={2.2} /></ToolButton>
          <AddressBar>
            <SiteInfo aria-label="Site information">
              <Stroke d="M12 2.500a9.500 9.500 0 1 1 0 19 9.500 9.500 0 0 1 0-19zM12 11v6M12 7v2" size={22} w={2} />
            </SiteInfo>
            <AddressInput aria-label="Address" defaultValue="127.0.0.1:8000/manager/requests" />
            <StarButton aria-label="Bookmark">
              <Stroke d="m12 2.500 2.600 6.500 7 .5-5.400 4.500 1.800 6.800L12 17l-6 3.800L7.800 14 2.400 9.500l7-.5z" w={2} />
            </StarButton>
          </AddressBar>
          <ToolButton aria-label="Face extension"><Face /></ToolButton>
          <ToolButton aria-label="Font extension"><FnBadge>f?</FnBadge></ToolButton>
          <ToolButton aria-label="Extensions"><Puzzle /></ToolButton>
          <ToolDivider />
          <ToolButton aria-label="Downloads"><Stroke d="M12 1v15M5.500 10l6.500 6.500 6.500-6.500M1.500 17v5.500h21V17" w={2.4} /></ToolButton>
          <Avatar>O</Avatar>
          <UpdatePill>
            New Chrome available
            <svg width="5" height="26" viewBox="0 0 5 26" fill="currentColor">
              <circle cx="2.500" cy="3" r="2.500" /><circle cx="2.500" cy="13" r="2.500" /><circle cx="2.500" cy="23" r="2.500" />
            </svg>
          </UpdatePill>
        </Toolbar>
      </TabStripBack>

      <Page>
        <Sidebar>
          <Brand><BrandMark><FaUsersGear size={45} /></BrandMark>WorkWise</Brand>
          <Nav>
            <NavLink href="#dashboard"><NavIcon><FaGaugeHigh size={24} /></NavIcon>Dashboard</NavLink>
            <NavSection>TEAM MANAGEMENT</NavSection>
            <ul>
              {teamLinks.map(([label, icon]) => (
                <li key={label}><NavLink href="#team"><NavIcon>{icon}</NavIcon>{label}</NavLink></li>
              ))}
            </ul>
          </Nav>
          <SidebarFooter>
            <LogoutButton><FaRightFromBracket size={24} />Logout</LogoutButton>
          </SidebarFooter>
        </Sidebar>

        <Main>
          <Header>
            <HeaderMark><FaUsersGear size={30} /></HeaderMark>
            WorkWise
            <Clock>
              <ClockTime>10:06:34 PM</ClockTime>
              <Muted>Mon, May 26</Muted>
            </Clock>
            <Profile>
              <Account />
              <div>
                <p>Madaline Roob</p>
                <Muted>Manager</Muted>
              </div>
            </Profile>
          </Header>

          <Content>
            <Title>Employee Requests</Title>

            <Card>
              <CardHeader>Filter Requests</CardHeader>
              <FilterForm onSubmit={(e) => e.preventDefault()}>
                <Field>
                  <label htmlFor="status">Status</label>
                  <select id="status"><option>All Statuses</option></select>
                </Field>
                <Field>
                  <label htmlFor="type">Request Type</label>
                  <select id="type"><option>All Types</option></select>
                </Field>
                <Buttons>
                  <ActionButton type="submit" $tone="#0d6efd">Apply Filters</ActionButton>
                  <ActionButton type="reset" $tone="#6c757d">Reset</ActionButton>
                </Buttons>
              </FilterForm>
            </Card>

            <Stats>
              {stats.map((s) => (
                <Card key={s.label}>
                  <StatBody $iconWidth={s.iconWidth}>
                    <div>
                      <StatLabel $tone={s.tone}>{s.label}</StatLabel>
                      <StatValue>0</StatValue>
                    </div>
                    {s.icon}
                  </StatBody>
                </Card>
              ))}
            </Stats>

            <Card>
              <CardHeader>Employee Requests</CardHeader>
              <Empty>No requests found matching your criteria.</Empty>
            </Card>
          </Content>
        </Main>
      </Page>

      <Taskbar>
        <StartButton aria-label="Start"><Windows /></StartButton>
        <SearchBox>
          <svg width="26" height="26" viewBox="0 0 26 26" fill="none" stroke="#111" strokeWidth="1.800">
            <circle cx="16.500" cy="9" r="8" /><path d="M10.500 14.500 1 25" />
          </svg>
          <input aria-label="Search" placeholder="Type here to search" />
          <Scene />
        </SearchBox>
        {tasks.map((t) => (
          <TaskButton key={t.name} aria-label={t.name} $open={t.open} $active={t.active} $width={t.width}>{t.icon}</TaskButton>
        ))}
        <Tray>
          <Weather><Thermometer /><span dir="rtl">أقل...</span></Weather>
          <TrayButton aria-label="Show hidden icons"><Stroke d="m3 17 9-10 9 10" size={22} w={1.8} /></TrayButton>
          <TrayButton aria-label="Cloud"><CloudError /></TrayButton>
          <TrayButton aria-label="Update"><SyncTile /></TrayButton>
          <TrayButton aria-label="Battery"><Battery /></TrayButton>
          <TrayButton aria-label="Network"><Wifi /></TrayButton>
          <TrayButton aria-label="Volume"><Speaker /></TrayButton>
          <Language>ENG</Language>
          <DateTime>10:06 PM<br />5/26/2025</DateTime>
          <Notice aria-label="Notifications"><NoticeGlyph /><span>1</span></Notice>
          <ShowDesktop aria-label="Show desktop" />
        </Tray>
      </Taskbar>
    </Screen>
  );
}
